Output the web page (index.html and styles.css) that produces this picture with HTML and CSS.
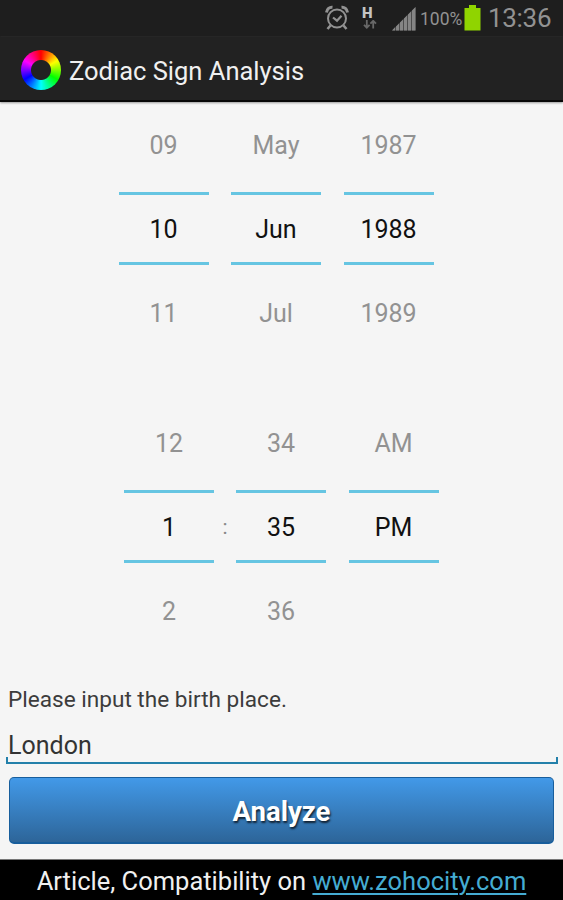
FILE: index.html
```html
<!DOCTYPE html>
<html lang="en">
<head>
<meta charset="utf-8">
<title>Zodiac Sign Analysis</title>
<link rel="stylesheet" href="styles.css">
</head>
<body>
<div class="status">
  <svg class="alarm" width="24" height="26" viewBox="0 0 24 26" fill="none" stroke="#929292" stroke-width="2">
    <circle cx="12" cy="13.5" r="9"/>
    <path d="M8 12.5l4 3.2 4.5-5" stroke-width="2.2"/>
    <path d="M1.5 7.5C2 4 4.500 2 7.500 2.300M16.500 2.300C19.500 2 22 4 22.500 7.500" stroke-width="3"/>
    <path d="M5.500 20.500l-3 3.500M18.500 20.500l3 3.500" stroke-width="2.600"/>
  </svg>
  <div class="data">
    <span class="data-type">H</span>
    <svg width="14" height="9" viewBox="0 0 14 9" fill="none" stroke="#686868" stroke-width="1.800"><path d="M3.800 0v7.500M1 4.800l2.800 2.900 2.800-2.900M10.200 8.500V1M7.400 3.700l2.800-2.900 2.800 2.900"/></svg>
  </div>
  <svg class="signal" width="24" height="24" viewBox="0 0 24 24" fill="#858585"><path d="M0 23.500L3 20.300V23.500zM4 19.500L7 16.500V23.500H4zM8 15.500L11 12.500V23.500H8zM12 11.500L15 8.500V23.500H12zM16 7.500L19 4.500V23.500H16zM20 3.500L23.500 0V23.500H20z"/><path d="M0 23.500L23.500 0V23.500z" opacity=".45"/></svg>
  <span class="percent">100%</span>
  <svg class="battery" width="17" height="26" viewBox="0 0 17 26"><path fill="#90d400" d="M5 0h7v3h4.500v22.500H.5V3H5z"/></svg>
  <span class="clock">13:36</span>
</div>
<header class="bar">
  <span class="wheel"></span>
  <h1 class="title">Zodiac Sign Analysis</h1>
</header>
<main class="content">
  <section class="picker date">
    <div class="col"><span>09</span><b>10</b><span>11</span></div>
    <div class="col"><span>May</span><b>Jun</b><span>Jul</span></div>
    <div class="col"><span>1987</span><b>1988</b><span>1989</span></div>
  </section>
  <section class="picker time">
    <div class="col"><span>12</span><b>1</b><span>2</span></div>
    <i class="colon">:</i>
    <div class="col"><span>34</span><b>35</b><span>36</span></div>
    <div class="col"><span>AM</span><b>PM</b><span></span></div>
  </section>
  <p class="prompt">Please input the birth place.</p>
  <div class="field"><span class="place">London</span></div>
  <button class="analyze">Analyze</button>
</main>
<footer class="footer"><span>Article, Compatibility on <a class="link">www.zohocity.com</a></span></footer>
</body>
</html>
```
FILE: styles.css
```css
* { box-sizing: border-box; }
body {
  margin: 0;
  width: 563px;
  height: 900px;
  overflow: hidden;
  display: flex;
  flex-direction: column;
  background: #f5f5f5;
  font-family: Roboto, "Liberation Sans", sans-serif;
  color: #000;
}
.status {
  height: 37px;
  display: flex;
  align-items: flex-start;
  background: #1e1e1e;
  color: #929292;
  padding-left: 325px;
  white-space: nowrap;
}
.alarm { margin-top: 5px; }
.data {
  width: 20px;
  margin: 6px 0 0 11px;
  display: flex;
  flex-direction: column;
}
.data-type {
  font-size: 15px;
  line-height: 14px;
  font-weight: 900;
  color: #c4c4c4;
  padding-left: 2px;
}
.data svg { margin-left: 3px; }
.signal { margin: 7px 0 0 12px; }
.percent { width: 42px; margin: 8px 0 0 4px; font-size: 17.500px; line-height: 22px; }
.battery { margin: 5px 0 0 2px; }
.clock { margin: 3px 0 0 7px; font-size: 26px; line-height: 30px; letter-spacing: -0.300px; }
.bar {
  height: 65px;
  display: flex;
  align-items: center;
  padding: 2px 0 0 21px;
  background: #222;
  border-bottom: 2px solid #080808;
  box-shadow: 0 1px 2px #999;
}
.wheel {
  width: 40px;
  height: 40px;
  border-radius: 50%;
  background: radial-gradient(circle, #222 9.500px, transparent 10.500px),
    conic-gradient(#f00, #ff0 60deg, #0f0 120deg, #0ff 180deg, #00f 240deg, #f0f 300deg, #f00);
}
.title {
  margin: 2px 0 0 8px;
  font-size: 25.500px;
  line-height: 30px;
  font-weight: 400;
  color: #f0f0f0;
}
.content { flex: 1; display: flex; flex-direction: column; }
.picker {
  display: flex;
  align-items: center;
  font-size: 25px;
}
.date { margin: 1px 0 0 118.500px; gap: 22.500px; }
.time { margin: 46px 0 0 124px; }
.col {
  width: 90px;
  height: 252px;
  display: flex;
  flex-direction: column;
  justify-content: space-between;
  text-align: center;
}
.col span { height: 84px; line-height: 86px; color: #929292; }
.col b {
  height: 73px;
  margin-bottom: 2px;
  line-height: 70px;
  font-weight: 400;
  color: #111;
  border-top: 3px solid #66c5e2;
  border-bottom: 3px solid #66c5e2;
}
.colon { width: 22px; font-style: normal; font-size: 21px; line-height: 30px; text-align: center; color: #888; }
.time .col:last-child { margin-left: 22.500px; }
.prompt { margin: 32px 0 0 8px; font-size: 22.600px; line-height: 30px; color: #3c3c3c; }
.field {
  height: 49px;
  margin: 0 5px 0 6px;
  padding: 16px 0 0 2px;
  border-bottom: 2px solid #2380aa;
  background:
    linear-gradient(#2380aa, #2380aa) left bottom / 2px 5px no-repeat,
    linear-gradient(#2380aa, #2380aa) right bottom / 2px 5px no-repeat;
}
.place { display: block; font-size: 25px; line-height: 30px; color: #333; }
.analyze {
  height: 67px;
  margin: 13px 9px 0;
  padding: 4px 0 0;
  border: 1px solid #185e9c;
  border-bottom-width: 2px;
  border-radius: 5px;
  background: linear-gradient(#4299e8, #2d6599);
  color: #fff;
  font: 700 27.500px/30px Roboto, "Liberation Sans", sans-serif;
  text-shadow: 1px 2px 2px #123;
}
.footer {
  height: 41px;
  padding-top: 6px;
  border-top: 1px solid #777;
  background: #000;
  color: #f0f0f0;
  text-align: center;
  font-size: 25.500px;
  line-height: 30px;
  white-space: nowrap;
}
.link {
  color: #45acd2;
  text-decoration: underline;
  text-decoration-thickness: 1.500px;
  text-underline-offset: 3px;
}
```
